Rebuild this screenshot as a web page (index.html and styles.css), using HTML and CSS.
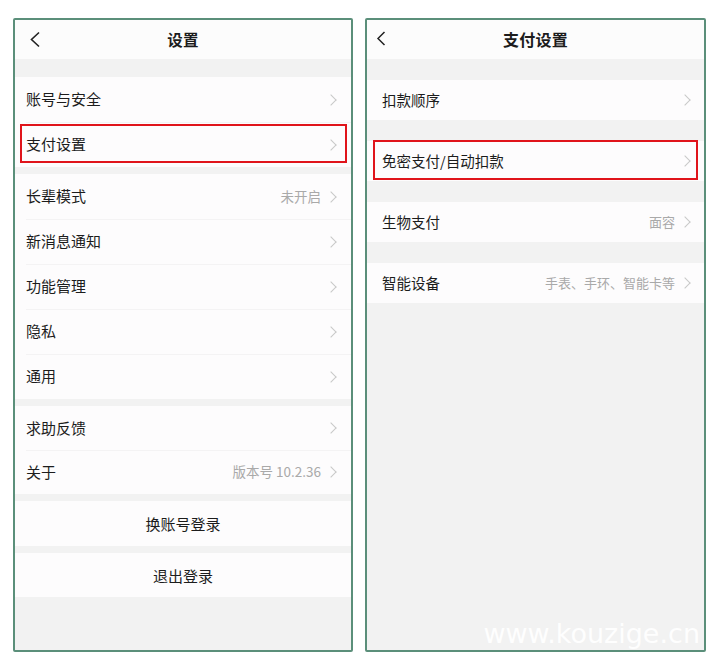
FILE: index.html
```html
<!DOCTYPE html>
<html lang="zh-CN">
<head>
    <meta charset="UTF-8">
    <title>设置</title>
    <link rel="stylesheet" href="styles.css">
</head>
<body>
    <div class="phone">
        <div class="topbar">
            <svg class="back" width="12" height="17" viewBox="0 0 12 17"><path d="M10 1.5 L2.5 8.5 L10 15.5" fill="none" stroke="#222" stroke-width="1.6"/></svg>
            <span class="title">设置</span>
        </div>
        <div class="group g-top">
            <div class="row"><span class="label">账号与安全</span><i class="chev"></i></div>
            <div class="row mark-left"><span class="label">支付设置</span><i class="chev"></i></div>
        </div>
        <div class="group">
            <div class="row"><span class="label">长辈模式</span><span class="val">未开启</span><i class="chev"></i></div>
            <div class="row"><span class="label">新消息通知</span><i class="chev"></i></div>
            <div class="row"><span class="label">功能管理</span><i class="chev"></i></div>
            <div class="row"><span class="label">隐私</span><i class="chev"></i></div>
            <div class="row"><span class="label">通用</span><i class="chev"></i></div>
        </div>
        <div class="group">
            <div class="row short"><span class="label">求助反馈</span><i class="chev"></i></div>
            <div class="row short"><span class="label">关于</span><span class="val">版本号 10.2.36</span><i class="chev"></i></div>
        </div>
        <div class="group">
            <div class="row center">换账号登录</div>
        </div>
        <div class="group g-last">
            <div class="row center short">退出登录</div>
        </div>
    </div>

    <div class="phone right">
        <div class="topbar">
            <svg class="back small" width="10" height="15" viewBox="0 0 10 15"><path d="M8.5 1 L2 7.5 L8.5 14" fill="none" stroke="#222" stroke-width="1.5"/></svg>
            <span class="title big">支付设置</span>
        </div>
        <div class="pgroup"><div class="prow"><span class="label">扣款顺序</span><i class="chev"></i></div></div>
        <div class="pgroup"><div class="prow mark-right"><span class="label">免密支付/自动扣款</span><i class="chev"></i></div></div>
        <div class="pgroup"><div class="prow"><span class="label">生物支付</span><span class="val">面容</span><i class="chev"></i></div></div>
        <div class="pgroup"><div class="prow"><span class="label">智能设备</span><span class="val">手表、手环、智能卡等</span><i class="chev"></i></div></div>
        <div class="watermark">www.kouzige.cn</div>
    </div>
</body>
</html>
```

FILE: styles.css
```css
body { margin: 0; padding: 18px 0 0 13px; background: #fff; display: flex; gap: 12px; font-family: "Noto Sans CJK SC", "Noto Sans", sans-serif; color: #1c1c1c; }
.phone { position: relative; width: 340px; height: 634px; box-sizing: border-box; border: 2px solid #5b8f7a; border-radius: 2px; background: #f2f2f2; overflow: hidden; }
.phone.right { width: 341px; }
.topbar { position: relative; height: 39px; background: #fcfcfc; display: flex; align-items: center; justify-content: center; }
.back { position: absolute; left: 14px; top: 11px; }
.back.small { left: 9px; top: 11px; }
.title { font-size: 15.5px; font-weight: 700; letter-spacing: 0.2px; margin-top: -1px; }
.title.big { font-size: 16px; }

.group { margin-top: 7px; background: #fdfcfd; }
.g-top { margin-top: 18px; }
.row { position: relative; height: 45px; display: flex; align-items: center; padding: 0 13px 0 11px; font-size: 15px; }
.row.short { height: 44px; }
.row + .row::before { content: ""; position: absolute; left: 11px; right: 0; top: 0; border-top: 1px solid #f4f3f4; }
.label { flex: 1; margin-top: -2px; }
.val { font-size: 13.5px; color: #a9a9a9; margin-right: 6px; margin-top: -2px; }
.chev { width: 7px; height: 7px; border-top: 1px solid #c8c8c8; border-right: 1px solid #c8c8c8; transform: rotate(45deg); margin-right: 3px; }
.row.center { justify-content: center; padding: 0; }

.pgroup { margin-top: 21px; background: #fdfcfd; }
.prow { position: relative; height: 40px; display: flex; align-items: center; padding: 0 12px 0 15px; font-size: 14.5px; }
.prow .val { font-size: 13px; margin-right: 6px; }

.mark-left::after, .mark-right::after { content: ""; position: absolute; border: 2px solid #e0141b; }
.mark-left::after { top: 2px; bottom: 4px; left: 5px; right: 4px; }
.mark-right::after { top: -1px; bottom: 1px; left: 6px; right: 6px; }

.watermark { position: absolute; right: 4px; bottom: 1px; font-family: "DejaVu Sans", sans-serif; font-size: 27px; color: rgba(255,255,255,0.95); }
```
